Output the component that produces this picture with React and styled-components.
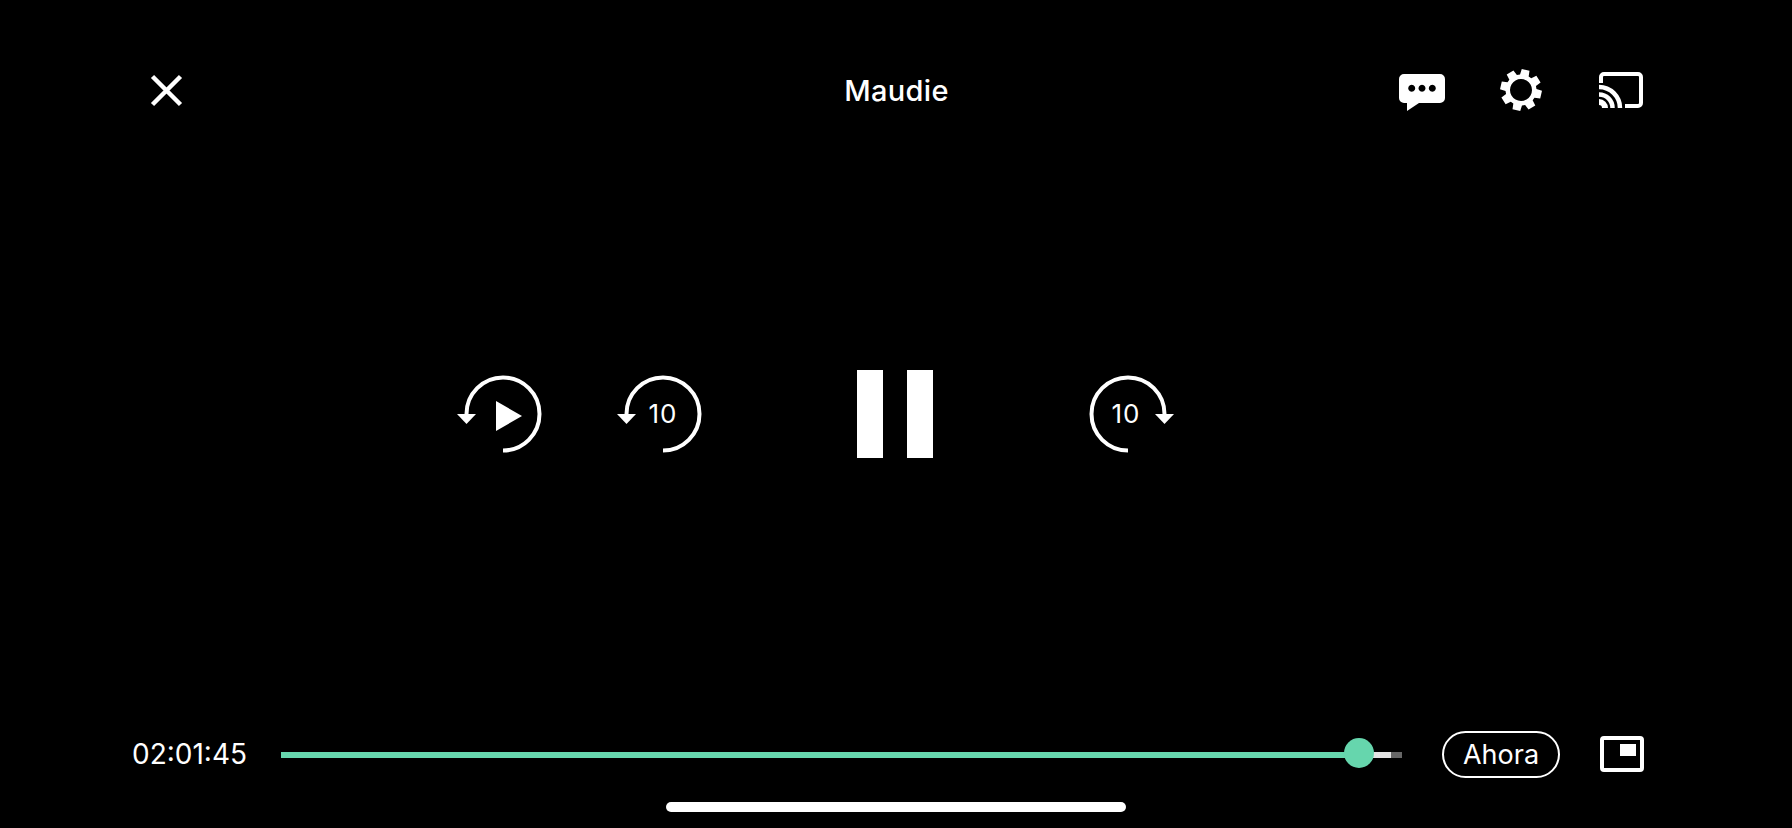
import React from 'react'
import styled, { createGlobalStyle } from 'styled-components'

const GlobalStyle = createGlobalStyle`
    html, body {
        margin: 0;
        padding: 0;
        background: #000;
    }
    body {
        font-family: Inter, "Liberation Sans", sans-serif;
        color: #fff;
    }
`

const Screen = styled.div`
    width: 1792px;
    height: 828px;
    background: #000;
    display: flex;
    flex-direction: column;
    overflow: hidden;
`

const TopBar = styled.header`
    display: grid;
    grid-template-columns: 1fr auto 1fr;
    align-items: center;
    height: 44px;
    margin-top: 68px;
    padding: 0 148px 0 149px;
`

const Title = styled.h1`
    margin: 0;
    padding-top: 1px;
    font-size: 29px;
    font-weight: 500;
    letter-spacing: 0.3px;
    line-height: 43px;
`

const TopActions = styled.div`
    display: flex;
    align-items: center;
    justify-content: flex-end;
    gap: 55px;
    padding-right: 1px;
`

const IconButton = styled.button`
    display: flex;
    align-items: center;
    padding: 0;
    border: 0;
    background: none;
    color: #fff;
    justify-self: ${props => props.$align || 'auto'};
`

const Transport = styled.main`
    flex: 1;
    display: grid;
    grid-template-columns: 1fr auto 1fr;
    align-items: center;
    column-gap: 155px;
    padding: 1px 2px 15px 0;
`

const SeekGroup = styled.div`
    display: flex;
    gap: 75px;
    justify-content: ${props => (props.$end ? 'flex-end' : 'flex-start')};
    padding-left: ${props => (props.$end ? 0 : 1)}px;
`

const SeekButton = styled.button`
    position: relative;
    width: 85px;
    height: 80px;
    padding: 0;
    border: 0;
    background: none;
    color: #fff;
`

const SeekLabel = styled.span`
    position: absolute;
    top: 0;
    left: ${props => props.$left}px;
    width: 72px;
    font-family: Inter, "Liberation Sans", sans-serif;
    font-size: 26px;
    font-weight: 400;
    line-height: 80px;
    text-align: center;
    letter-spacing: 1px;
`

const PauseButton = styled.button`
    display: flex;
    gap: 24px;
    padding: 0;
    border: 0;
    background: none;
`

const PauseBar = styled.span`
    width: 26px;
    height: 88px;
    background: #fff;
`

const BottomBar = styled.footer`
    display: flex;
    align-items: center;
    height: 48px;
    padding: 0 148px 0 132px;
`

const Time = styled.span`
    width: 149px;
    font-size: 28px;
    font-weight: 400;
    line-height: 48px;
`

const Track = styled.div`
    position: relative;
    display: flex;
    width: 1121px;
    height: 6px;
    margin-top: 2px;
    background: #666;
`

const Played = styled.div`
    width: 1078px;
    background: #66d6ad;
`

const Buffered = styled.div`
    width: 32px;
    background: #e4e4e4;
`

const Knob = styled.div`
    position: absolute;
    left: 1063px;
    top: -14px;
    width: 30px;
    height: 30px;
    border-radius: 50%;
    background: #66d6ad;
`

const LiveButton = styled.button`
    width: 118px;
    height: 47px;
    margin-left: 40px;
    padding: 0;
    border: 2px solid #fff;
    border-radius: 24px;
    background: none;
    color: #fff;
    font-family: Inter, "Liberation Sans", sans-serif;
    font-size: 27px;
    font-weight: 400;
    line-height: 41px;
`

const PipFrame = styled.button`
    display: flex;
    justify-content: flex-end;
    box-sizing: border-box;
    width: 44px;
    height: 36px;
    margin-left: 40px;
    padding: 4px 4px 0 0;
    border: 4px solid #fff;
    border-radius: 4px;
    background: none;
`

const PipInner = styled.span`
    width: 16px;
    height: 12px;
    background: #fff;
`

const HomeRow = styled.div`
    display: flex;
    justify-content: center;
    height: 50px;
    padding-top: 24px;
    box-sizing: border-box;
`

const HomeIndicator = styled.div`
    width: 460px;
    height: 10px;
    border-radius: 5px;
    background: #fff;
`

const CloseIcon = () => (
    <svg width="36" height="36" viewBox="0 0 36 36" style={{ marginLeft: -1 }}>
        <path d="M4.5 4.5L32.5 32.5M32.5 4.5L4.5 32.5" stroke="currentColor" strokeWidth="4.5" />
    </svg>
)

const ChatIcon = () => (
    <svg width="46" height="42" viewBox="0 0 46 42">
        <path
            fill="currentColor"
            fillRule="evenodd"
            d="M5 5H41A5 5 0 0 1 46 10V29A5 5 0 0 1 41 34H20L8 42V34H5A5 5 0 0 1 0 29V10A5 5 0 0 1 5 5Z
            M12.7 15.8a3.5 3.5 0 1 0 .01 0Z M23 15.8a3.5 3.5 0 1 0 .01 0Z M33.3 15.8a3.5 3.5 0 1 0 .01 0Z"
        />
    </svg>
)

// 8 teeth, slightly rotated like the reference
const gearTeeth = () => {
    const pts = []
    for (let i = 0; i < 8; i++) {
        const a = (i * 45 + 13) * Math.PI / 180
        const at = (r, d) => `${(21 + r * Math.cos(a + d)).toFixed(2)} ${(21 + r * Math.sin(a + d)).toFixed(2)}`
        pts.push(at(15.5, -0.29), at(21, -0.19), at(21, 0.19), at(15.5, 0.29))
    }
    return 'M' + pts.join('L') + 'Z'
}

const GearIcon = () => (
    <svg width="44" height="42" viewBox="0 0 44 42">
        <path
            fill="currentColor"
            fillRule="evenodd"
            d={gearTeeth() + 'M21 10a11 11 0 1 0 .01 0Z'}
        />
    </svg>
)

const CastIcon = () => (
    <svg width="44" height="36" viewBox="0 0 44 36" fill="none" stroke="currentColor" strokeWidth="4">
        <path d="M2 11V5A3 3 0 0 1 5 2H39A3 3 0 0 1 42 5V31A3 3 0 0 1 39 34H26" />
        <path d="M0 15C11.5 15 21 24.5 21 36" strokeWidth="4.5" />
        <path d="M0 22.5C7.5 22.5 13.5 28.5 13.5 36" strokeWidth="4.5" />
        <path d="M0 30A6 6 0 0 1 6 36" strokeWidth="6" />
    </svg>
)

const SeekIcon = ({ flip, play }) => (
    <svg width="85" height="80" viewBox="0 0 85 80" style={flip ? { transform: 'scaleX(-1)' } : undefined}>
        <path d="M46 76.5A36.5 36.5 0 1 0 9.5 40" fill="none" stroke="currentColor" strokeWidth="4" />
        <path d="M0 40H19L9.5 50Z" fill="currentColor" />
        {play && <path d="M39 27L65 42L39 57Z" fill="currentColor" />}
    </svg>
)

const App = () => (
    <Screen>
        <GlobalStyle />
        <TopBar>
            <IconButton $align="start"><CloseIcon /></IconButton>
            <Title>Maudie</Title>
            <TopActions>
                <IconButton><ChatIcon /></IconButton>
                <IconButton><GearIcon /></IconButton>
                <IconButton><CastIcon /></IconButton>
            </TopActions>
        </TopBar>
        <Transport>
            <SeekGroup $end>
                <SeekButton><SeekIcon play /></SeekButton>
                <SeekButton>
                    <SeekIcon />
                    <SeekLabel $left={10}>10</SeekLabel>
                </SeekButton>
            </SeekGroup>
            <PauseButton>
                <PauseBar />
                <PauseBar />
            </PauseButton>
            <SeekGroup>
                <SeekButton>
                    <SeekIcon flip />
                    <SeekLabel $left={1}>10</SeekLabel>
                </SeekButton>
            </SeekGroup>
        </Transport>
        <BottomBar>
            <Time>02:01:45</Time>
            <Track>
                <Played />
                <Buffered />
                <Knob />
            </Track>
            <LiveButton>Ahora</LiveButton>
            <PipFrame><PipInner /></PipFrame>
        </BottomBar>
        <HomeRow>
            <HomeIndicator />
        </HomeRow>
    </Screen>
)

export default App
